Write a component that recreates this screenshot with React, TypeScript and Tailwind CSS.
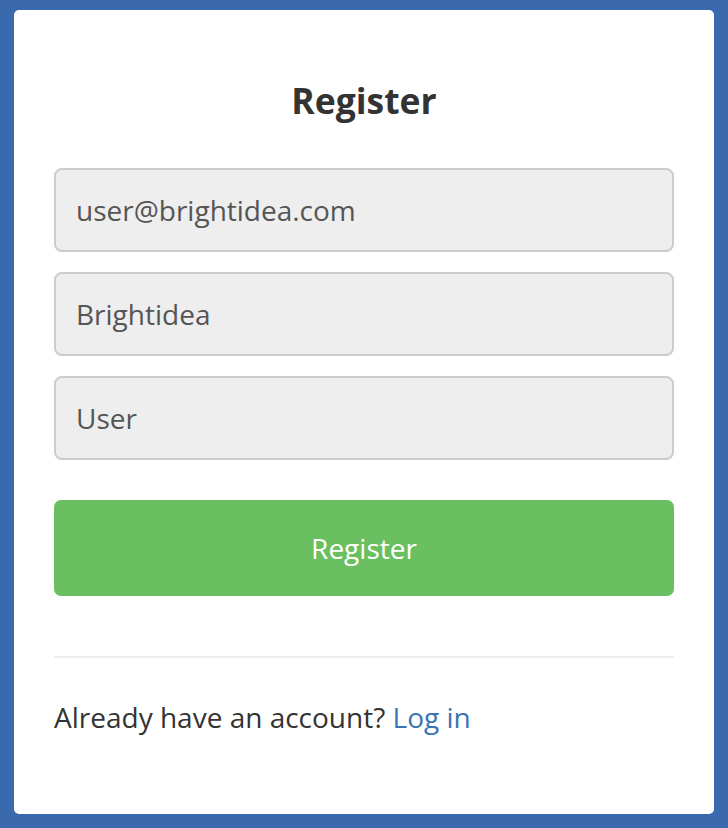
export default function App() {
  const fields = ["user@brightidea.com", "Brightidea", "User"];
  return (
    <div
      className="h-[828px] w-[728px] bg-[#3b69ad] pt-[10px] px-[14px] pb-[14px]"
      style={{ fontFamily: '"Open Sans", "Noto Sans", sans-serif' }}
    >
      <div className="h-[804px] rounded-[5px] bg-white px-[40px] pt-[64px]">
        <h1 className="text-center text-[35.5px] font-bold leading-[52px] text-[#333333]">Register</h1>
        <div className="mt-[42px] flex flex-col gap-[20px]">
          {fields.map((f) => (
            <input
              key={f}
              defaultValue={f}
              className="h-[84px] w-full rounded-[8px] border-2 border-[#cccccc] bg-[#eeeeee] px-[20px] text-[28px] text-[#555555] outline-none"
            />
          ))}
        </div>
        <button className="mt-[40px] h-[96px] w-full rounded-[7px] bg-[#6abf60] text-[28px] text-white">
          Register
        </button>
        <div className="mt-[60px] h-[2px] bg-[#eeeeee]" />
        <p className="mt-[39px] text-[28px] leading-[40px] text-[#333333]">
          Already have an account? <a className="text-[#3a74b4]">Log in</a>
        </p>
      </div>
    </div>
  );
}
